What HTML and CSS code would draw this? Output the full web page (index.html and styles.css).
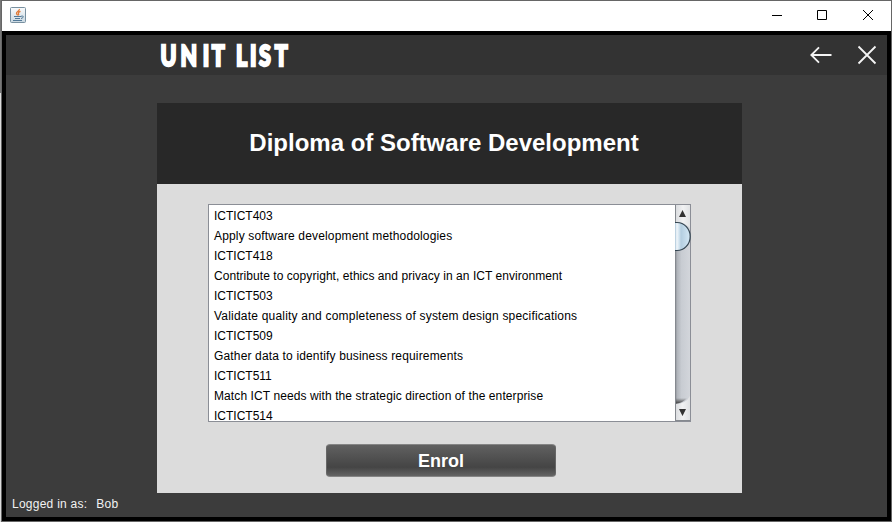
FILE: index.html
```html
<!DOCTYPE html>
<html lang="en">
<head>
<meta charset="utf-8">
<title>Unit List</title>
<link rel="stylesheet" href="styles.css">
</head>
<body>
<div class="window">
  <div class="titlebar">
    <svg class="java" width="16" height="16" viewBox="0 0 16 16" fill="none">
      <defs><linearGradient id="tile" x2="0" y2="1"><stop stop-color="#fafbfc"/><stop offset="1" stop-color="#c9d8e1"/></linearGradient></defs>
      <rect x=".5" y=".5" width="15" height="15" rx="1" fill="url(#tile)" stroke="#7890a0"/>
      <path d="M9.300 2C10 4 6 4.400 6.500 6.400Q6.700 7.400 7.800 8.300M10.500 4.400Q7.500 5.400 8.600 6.800Q9 7.500 8.200 8.400" stroke="#e17b38" stroke-width="1.300"/>
      <path d="M4 9.500H11M5 11.500H10M3 13.500H12M11 9.300C14.500 8.300 13.800 11 11 11.500" stroke="#527998"/>
    </svg>
    <svg class="controls" width="104" height="12" viewBox="0 0 104 12" fill="none" stroke="#000">
      <path d="M0 6.500H10M45.500 1.500H54.500V10.500H45.500ZM91 1L101 11M101 1L91 11"/>
    </svg>
  </div>
  <div class="app">
    <header class="header">
      <svg class="heading" width="150" height="40" viewBox="0 0 150 40">
        <g transform="scale(.74 1)">
          <text y="31" x="2 29 59 71.300">UNIT</text>
          <text y="31" x="104 123 135 156.300">LIST</text>
        </g>
      </svg>
      <svg class="nav" width="68" height="20" viewBox="0 0 68 20" fill="none" stroke="#f5f5f5" stroke-width="1.800">
        <path d="M22.500 10H2.500M10 2.300L2.300 10L10 17.700M49.500 1.500L66.500 18.500M66.500 1.500L49.500 18.500"/>
      </svg>
    </header>
    <main class="panel">
      <h1 class="course">Diploma of Software Development</h1>
      <div class="content">
        <div class="listbox">
          <ul class="units">
            <li>ICTICT403</li>
            <li class="wide">Apply software development methodologies</li>
            <li>ICTICT418</li>
            <li class="slight">Contribute to copyright, ethics and privacy in an ICT environment</li>
            <li>ICTICT503</li>
            <li class="wider">Validate quality and completeness of system design specifications</li>
            <li>ICTICT509</li>
            <li class="wide">Gather data to identify business requirements</li>
            <li>ICTICT511</li>
            <li class="medium">Match ICT needs with the strategic direction of the enterprise</li>
            <li>ICTICT514</li>
          </ul>
          <svg class="scrollbar" width="16" height="216" viewBox="0 0 16 216">
            <defs>
              <linearGradient id="track"><stop stop-color="#73777d"/><stop offset=".12" stop-color="#aeb2b8"/><stop offset=".4" stop-color="#c8ccd2"/><stop offset="1" stop-color="#d4d7dc"/></linearGradient>
              <linearGradient id="thumb"><stop stop-color="#a9c4d7"/><stop offset=".12" stop-color="#f2f7fb"/><stop offset=".25" stop-color="#d6e6f1"/><stop offset=".4" stop-color="#b4cee0"/><stop offset="1" stop-color="#d5e9f6"/></linearGradient>
              <linearGradient id="cap"><stop stop-color="#d8dadd"/><stop offset=".5" stop-color="#f1f2f3"/><stop offset="1" stop-color="#dfe1e3"/></linearGradient>
              <linearGradient id="shade" x2="0" y2="1"><stop stop-color="#444" stop-opacity="0"/><stop offset="1" stop-color="#333"/></linearGradient>
            </defs>
            <rect width="16" height="216" fill="url(#track)"/>
            <path d="M0 0H16V25Q12 17 0 17Z" fill="url(#cap)"/>
            <path d="M0 193H12Q8 198 0 199Z" fill="url(#shade)"/>
            <path d="M0 199Q11 199 15 191V216H0Z" fill="url(#cap)"/>
            <path d="M.5 0V216M0 215.500H15" fill="none" stroke="#85898f"/>
            <path d="M15.500 0V216" stroke="#8b8e96"/>
            <path d="M0 17.500H2A13.200 14 0 0 1 2 45.500H0Z" fill="url(#thumb)"/>
            <path d="M0 17.500H2A13.200 14 0 0 1 2 45.500H0" fill="none" stroke="#344551" stroke-width="1.200"/>
            <path d="M7.500 5L11 12H4ZM4 204H11L7.500 211Z" fill="#333"/>
          </svg>
        </div>
        <button class="enrol">Enrol</button>
      </div>
    </main>
    <footer class="status"><span class="label">Logged in as:</span><span class="user">Bob</span></footer>
  </div>
</div>
</body>
</html>
```

FILE: styles.css
```css
* { box-sizing: border-box; }
body { margin: 0; width: 892px; height: 522px; overflow: hidden; padding: 1px 1px 1px 2px; background: linear-gradient(90deg, #555 1px, transparent 1px) 1px 0 / 891px 522px no-repeat, linear-gradient(#777 93px, #ddd 93px); font-family: "Liberation Sans", Arial, sans-serif; }
.window { width: 889px; height: 520px; background: #fff; box-shadow: 0 0 0 1px #666; }
.titlebar { height: 30px; display: flex; justify-content: space-between; align-items: flex-start; padding: 6px 15px 0 8px; }
.controls { margin-top: 2px; }
.app { height: 490px; border: 4px solid #000; background: #3c3c3c; display: flex; flex-direction: column; }
.header { height: 40px; flex: none; background: #333; display: flex; justify-content: space-between; padding: 0 10px 0 153px; }
.heading text { font-family: Lato, sans-serif; font-size: 29px; font-weight: 900; fill: #fff; stroke: #fff; stroke-width: 2.4px; }
.nav { margin-top: 10px; }
.panel { width: 585px; height: 390px; flex: none; margin: 28px 0 0 151px; background: #dcdcdc; }
.course { margin: 0; height: 81px; line-height: 80px; background: #282828; color: #fff; text-align: center; font-size: 24px; font-weight: bold; padding-right: 11px; }
.content { display: flex; flex-direction: column; padding: 20px 51px 0; }
.listbox { width: 483px; height: 218px; border: 1px solid #8b8e96; border-right: 0; background: #fff; display: flex; justify-content: space-between; overflow: hidden; }
.units { margin: 0; padding: 1px 0 0 5px; list-style: none; font-size: 12px; line-height: 20px; color: #000; white-space: nowrap; }
.slight { letter-spacing: .055px; }
.medium { letter-spacing: .095px; }
.wide { letter-spacing: .155px; }
.wider { letter-spacing: .205px; }
.scrollbar { flex: none; }
.enrol { width: 230px; height: 33px; margin: 22px 0 0 118px; border: 1px solid #666; border-top-color: #858585; border-bottom-color: #858585; border-radius: 4px; background: linear-gradient(#616161, #494949 60%, #454545 72%, #646464); color: #fff; font: bold 18px/31px "Liberation Sans", Arial, sans-serif; padding: 1px 0 0; }
.status { display: flex; gap: 9px; padding: 3px 0 0 6px; color: #f2f2f2; font-size: 12px; line-height: 16px; }
.label { letter-spacing: .25px; }
.user { letter-spacing: .3px; }
```
